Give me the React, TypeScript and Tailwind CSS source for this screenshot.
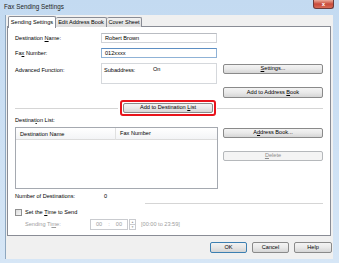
import React from "react";

const font = { fontFamily: '"Liberation Sans", Arial, sans-serif' };

function Btn({
  children,
  className = "",
  disabled = false,
  def = false,
}: {
  children: React.ReactNode;
  className?: string;
  disabled?: boolean;
  def?: boolean;
}) {
  const tone = disabled
    ? "border-[#b5b8bb] bg-[#f4f4f4] text-[#8d8d8d]"
    : def
      ? "border-[#3c7fb1] bg-gradient-to-b from-[#f2f2f2] via-[#e6e6e6] to-[#d4d4d4] text-black"
      : "border-[#8a8a8a] bg-gradient-to-b from-[#f4f4f4] via-[#e9e9e9] to-[#d6d6d6] text-black";
  return (
    <div className={`flex items-center justify-center rounded-[2px] border ${tone} ${className}`}>
      <span className="leading-none">{children}</span>
    </div>
  );
}

function Line({ className = "" }: { className?: string }) {
  return <div className={`h-px bg-[#d5d5d5] ${className}`} />;
}

export default function App() {
  return (
    <div
      className="flex h-[263px] w-[339px] flex-col overflow-hidden bg-gradient-to-b from-[#c3daf1] to-[#d6e6f6] text-[5.6px] text-black"
      style={font}
    >
      {/* title bar */}
      <div className="flex h-[15px] shrink-0 items-start justify-between">
        <span className="ml-[4px] mt-[3px] text-[6.3px] leading-[8px] text-[#1e1e1e]">Fax Sending Settings</span>
        <div className="mr-[5px] flex h-[9px] w-[21px] items-center justify-center rounded-b-[3px] border border-t-0 border-[#6d3a3a] bg-gradient-to-b from-[#e9a99a] via-[#c9493a] to-[#d66a55]">
          <span className="text-[6px] font-bold leading-none text-white">x</span>
        </div>
      </div>

      {/* body */}
      <div className="ml-[5px] mr-[6px] flex h-[244px] flex-col border-l border-[#8ea7bf] bg-[#f0f0f0]">
        {/* tabs */}
        <div className="relative z-10 flex h-[12px] items-end pl-[2px] pt-0">
          <div className="-mb-px flex h-[12px] w-[48px] items-center justify-center rounded-t-[2px] border border-b-0 border-[#898c95] bg-white">
            Sending Settings
          </div>
          <div className="flex h-[10px] w-[51px] items-center justify-center rounded-t-[2px] border border-l-0 border-b-0 border-[#898c95] bg-gradient-to-b from-[#f2f2f2] to-[#dcdcdc]">
            Edit Address Book
          </div>
          <div className="flex h-[10px] w-[35px] items-center justify-center rounded-t-[2px] border border-l-0 border-b-0 border-[#898c95] bg-gradient-to-b from-[#f2f2f2] to-[#dcdcdc]">
            Cover Sheet
          </div>
        </div>

        {/* panel */}
        <div className="ml-px mt-[-1px] flex h-[210px] w-[324px] flex-col border border-[#898c95] bg-white pl-[7px] pr-[7px] pt-[6px]">
          <div className="flex h-[10px] items-center">
            <span className="w-[86px]">
              Destination <u>N</u>ame:
            </span>
            <div className="flex h-[10px] w-[116px] items-center border border-[#d0d3d8] border-t-[#b9bcc2] pl-[3px]">Robert Brown</div>
          </div>
          <div className="mt-[5px] flex h-[10px] items-center">
            <span className="w-[86px]">
              Fa<u>x</u> Number:
            </span>
            <div className="flex h-[10px] w-[116px] items-center border border-[#8fb2d6] border-t-[#5d8fc4] pl-[3px]">012xxxx</div>
          </div>
          <div className="mt-[5px] flex h-[21px] items-start">
            <span className="mt-[3px] w-[86px]">Advanced Function:</span>
            <div className="flex h-[21px] w-[116px] items-start border border-[#d5d8dc] pl-[2px] pt-[2px]">
              <span className="w-[49px]">Subaddress:</span>
              <span className="-mt-px">On</span>
            </div>
            <Btn className="ml-[6px] mt-px h-[10px] w-[100px]">
              <u>S</u>ettings...
            </Btn>
          </div>
          <div className="mt-[3px] flex justify-end">
            <Btn className="h-[11px] w-[100px]">
              Add to Address <u>B</u>ook
            </Btn>
          </div>
          <div className="mt-[2px] flex h-[16px] items-center">
            <Line className="w-[103px]" />
            <div className="ml-[2px] flex h-[16px] w-[96px] items-center justify-center rounded-[3px] border-2 border-[#e8141c]">
              <Btn className="h-[10px] w-[90px]">
                Add to Destination <u>L</u>ist
              </Btn>
            </div>
            <Line className="ml-px flex-1" />
          </div>
          <div className="flex h-[8px] items-center">
            <span>
              Destinat<u>i</u>on List:
            </span>
          </div>
          <div className="mt-[3px] flex">
            <div className="flex h-[62px] w-[203px] flex-col border border-[#a5a9b0]">
              <div className="flex h-[12px] items-center border-b border-[#dcdcdc] bg-gradient-to-b from-white to-[#f3f4f6]">
                <span className="w-[100px] border-r border-[#e0e0e0] pl-[4px] leading-[12px]">Destination Name</span>
                <span className="pl-[4px]">Fax Number</span>
              </div>
            </div>
            <div className="ml-[5px] flex w-[100px] flex-col">
              <Btn className="mt-px h-[10px] w-[100px]">
                A<u>d</u>dress Book...
              </Btn>
              <Btn className="mt-[13px] h-[10px] w-[100px]" disabled>
                <u>D</u>elete
              </Btn>
            </div>
          </div>
          <div className="mt-[3px] flex h-[8px] items-center">
            <span className="w-[89px]">Number of Destinations:</span>
            <span>0</span>
          </div>
          <Line className="ml-[130px] mt-[3px]" />
          <div className="mt-[5px] flex h-[7px] items-center">
            <div className="h-[7px] w-[7px] border border-[#8f8f8f] bg-gradient-to-br from-[#dcdcdc] to-[#f6f6f6]" />
            <span className="ml-[3px]">
              Set the <u>T</u>ime to Send
            </span>
          </div>
          <div className="mt-[3px] flex h-[11px] items-center text-[#9d9d9d]">
            <span className="w-[75px] pl-[10px]">
              Sending Ti<u>m</u>e:
            </span>
            <div className="flex h-[11px] w-[38px] items-center justify-center border border-[#c9cbcf]">
              <span>00</span>
              <span className="mx-[6px]">:</span>
              <span>00</span>
            </div>
            <div className="ml-px flex h-[11px] w-[7px] flex-col border border-[#c9cbcf]">
              <div className="flex flex-1 items-center justify-center border-b border-[#c9cbcf] text-[3px] leading-none">▲</div>
              <div className="flex flex-1 items-center justify-center text-[3px] leading-none">▼</div>
            </div>
            <span className="ml-[5px]">[00:00 to 23:59]</span>
          </div>
        </div>

        {/* dialog buttons */}
        <div className="mt-[6px] flex justify-end gap-[5px] pr-[1px]">
          <Btn className="h-[11px] w-[37px]" def>
            OK
          </Btn>
          <Btn className="h-[11px] w-[37px]">Cancel</Btn>
          <Btn className="h-[11px] w-[38px]">Help</Btn>
        </div>
      </div>
    </div>
  );
}
